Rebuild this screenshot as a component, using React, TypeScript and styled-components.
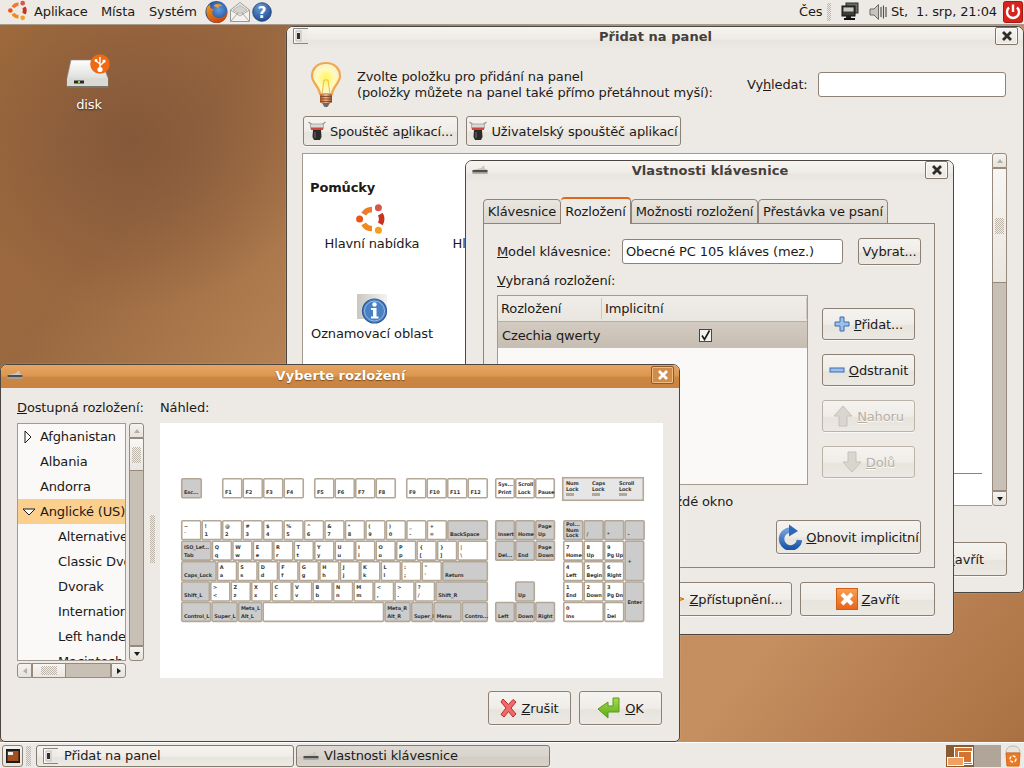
import * as React from "react";
import styled, { createGlobalStyle } from "styled-components";

const GlobalStyle = createGlobalStyle`
  html, body { margin: 0; padding: 0; overflow: hidden; background: #8a5a38; }
  body, button, input { font-family: "DejaVu Sans", sans-serif; font-size: 13px; letter-spacing: -0.13px; color: #1c1a18; }
  * { box-sizing: border-box; }
`;

const Desktop = styled.div`
  position: relative;
  width: 1024px;
  height: 768px;
  overflow: hidden;
  display: flex;
  flex-direction: column;
  background:
    radial-gradient(ellipse 190px 170px at 130px 140px, #85583a 0%, rgba(133, 88, 58, 0) 100%),
    linear-gradient(128deg, #a06b3c 0%, #9a6840 18%, #c08c5c 42%, #c58f60 78%, #a86e40 100%);
`;

const Workspace = styled.div`
  flex: 1;
`;

const Panel = styled.div`
  height: 25px;
  display: flex;
  align-items: center;
  background: #edeae5;
`;

const TopBar = styled(Panel)`
  border-bottom: 1px solid #a99b8b;
  padding: 0 1px 1px 8px;
`;

const BottomBar = styled(Panel)`
  border-top: 1px solid #fff;
  height: 26px;
  padding: 0 2px;
`;

const MenuItem = styled.span<{ $w: number }>`
  width: ${(p) => p.$w}px;
  font-size: 13px;
  white-space: nowrap;
`;

const Launchers = styled.div`
  display: flex;
  align-items: center;
  gap: 1px;
`;

const Spacer = styled.div`
  flex: 1;
`;

const Grip = styled.div<{ $h: number; $w?: number }>`
  width: ${(p) => p.$w ?? 5}px;
  height: ${(p) => p.$h}px;
  background: repeating-conic-gradient(#bdb5aa 0 25%, transparent 0 50%) 0 0 / 2px 2px;
`;

const Tray = styled.div`
  display: flex;
  align-items: center;
`;

const Clock = styled.span`
  font-size: 13px;
  white-space: pre;
  margin: 0 6px 0 4px;
`;

const DesktopIcon = styled.div`
  position: absolute;
  left: 48px;
  top: 54px;
  width: 82px;
  display: flex;
  flex-direction: column;
  align-items: center;
  gap: 7px;
  color: #fff;
  font-size: 13px;
  text-shadow: 0 1px 2px rgba(0, 0, 0, 0.6);
`;

const Win = styled.div<{ $l: number; $t: number; $w: number; $h: number; $z: number }>`
  position: absolute;
  left: ${(p) => p.$l}px;
  top: ${(p) => p.$t}px;
  width: ${(p) => p.$w}px;
  height: ${(p) => p.$h}px;
  z-index: ${(p) => p.$z};
  background: #edeae5;
  border: 1px solid #4c463f;
  border-radius: 7px 7px 5px 5px;
  box-shadow: 0 0 0 0.5px rgba(255, 255, 255, 0.15);
  display: flex;
  flex-direction: column;
  overflow: hidden;
`;

const TitleBar = styled.div<{ $focus?: boolean }>`
  height: 23px;
  flex: none;
  display: grid;
  grid-template-columns: 1fr auto 1fr;
  align-items: center;
  padding: 0 5px ${(p) => (p.$focus ? 3 : 5)}px 6px;
  background: ${(p) =>
    p.$focus
      ? "linear-gradient(#e7a563 0%, #dd9850 45%, #cc8643 55%, #c98242 100%)"
      : "linear-gradient(#f6f4f0 0%, #efece7 50%, #e8e4de 60%, #edeae5 100%)"};
`;

const TitleText = styled.span<{ $focus?: boolean }>`
  font-weight: bold;
  font-size: 13px;
  letter-spacing: 0.05px;
  color: ${(p) => (p.$focus ? "#fff" : "#45403a")};
  text-shadow: ${(p) => (p.$focus ? "0 1px 1px rgba(90, 50, 10, 0.7)" : "none")};
`;

const CloseBox = styled.div<{ $focus?: boolean }>`
  justify-self: end;
  width: 23px;
  height: 18px;
  border-radius: 2px;
  display: flex;
  align-items: center;
  justify-content: center;
  border: 1px solid ${(p) => (p.$focus ? "#8f5a26" : "#7f7569")};
  background: ${(p) => (p.$focus ? "#d08c4a" : "linear-gradient(#f7f5f1, #e9e5df)")};
  box-shadow: inset 0 0 0 1px ${(p) => (p.$focus ? "rgba(255, 220, 170, 0.6)" : "rgba(255, 255, 255, 0.7)")};
`;

const AddBody = styled.div`
  flex: 1;
  display: flex;
  flex-direction: column;
  padding: 12px 16px 16px 16px;
`;

const IntroRow = styled.div`
  height: 54px;
  display: flex;
  align-items: flex-start;
`;

const BulbSlot = styled.div`
  width: 54px;
  padding-left: 6px;
  margin-top: -1px;
`;

const IntroText = styled.div`
  line-height: 16px;
  margin-top: 7px;
  width: 390px;
  white-space: nowrap;
`;

const SearchLabel = styled.span`
  margin-top: 15px;
  width: 71px;
`;

const Entry = styled.div<{ $w: number; $h?: number }>`
  width: ${(p) => p.$w}px;
  height: ${(p) => p.$h ?? 25}px;
  background: #fff;
  border: 1px solid #8d8275;
  border-radius: 3px;
  padding: 0 3px;
  display: flex;
  align-items: center;
  white-space: nowrap;
`;

const SearchEntry = styled(Entry)`
  margin-top: 10px;
`;

const Btn = styled.div<{ $w?: number; $h?: number; $off?: boolean }>`
  ${(p) => (p.$w ? `width: ${p.$w}px;` : "")}
  height: ${(p) => p.$h ?? 33}px;
  flex: none;
  display: flex;
  align-items: center;
  justify-content: center;
  gap: 4px;
  white-space: nowrap;
  border: 1px solid ${(p) => (p.$off ? "#bcb3a8" : "#8b8073")};
  border-radius: 3px;
  color: ${(p) => (p.$off ? "#b5aea5" : "#1c1a18")};
  text-shadow: ${(p) => (p.$off ? "0 1px 0 #fff" : "none")};
  background: linear-gradient(#f5f3ef 0%, #f0ede9 50%, #e7e3dd 56%, #ece9e4 100%);
  box-shadow: 0 1px 0 rgba(255, 255, 255, 0.6);
`;

const ButtonRow = styled.div`
  display: flex;
  gap: 8px;
`;

const CatalogArea = styled.div`
  margin-top: 7px;
  height: 353px;
  display: flex;
  margin-left: -1px;
`;

const Catalog = styled.div`
  flex: 1;
  background: #fff;
  border: 1px solid #a59a8d;
  border-right: none;
  padding: 26px 7px 0;
  position: relative;
`;

const GroupTitle = styled.div`
  font-weight: bold;
  font-size: 13px;
  margin-bottom: 8px;
`;

const ItemGrid = styled.div`
  display: grid;
  grid-template-columns: 122px 122px;
  grid-auto-rows: 90px;
  margin-left: 1px;
`;

const Item = styled.div`
  display: flex;
  flex-direction: column;
  align-items: center;
  white-space: nowrap;
`;

const ItemIcon = styled.div`
  height: 32px;
  margin-bottom: 1px;
`;

const CatalogRule = styled.div`
  position: absolute;
  right: 10px;
  top: 319px;
  width: 300px;
  height: 1px;
  background: #8d8275;
`;

const VBar = styled.div<{ $w?: number }>`
  width: ${(p) => p.$w ?? 15}px;
  flex: none;
  display: flex;
  flex-direction: column;
`;

const HBar = styled.div`
  height: 15px;
  width: 109px;
  margin-top: 2px;
  display: flex;
`;

const Stepper = styled.div<{ $end: "start" | "end"; $horizontal?: boolean }>`
  flex: none;
  ${(p) => (p.$horizontal ? "width: 15px;" : "height: 15px;")}
  display: flex;
  align-items: center;
  justify-content: center;
  border: 1px solid #958a7d;
  background: linear-gradient(#f5f3ef, #e6e2dc);
  border-radius: ${(p) =>
    p.$horizontal
      ? p.$end === "start"
        ? "3px 0 0 3px"
        : "0 3px 3px 0"
      : p.$end === "start"
      ? "3px 3px 0 0"
      : "0 0 3px 3px"};
`;

const Thumb = styled.div<{ $len: number; $horizontal?: boolean }>`
  flex: none;
  ${(p) => (p.$horizontal ? `width: ${p.$len}px;` : `height: ${p.$len}px;`)}
  display: flex;
  align-items: center;
  justify-content: center;
  border: 1px solid #958a7d;
  background: linear-gradient(#f8f6f3, #eae6e0);
`;

const Trough = styled.div`
  flex: 1;
  background: #c8bfb5;
  border: 1px solid #958a7d;
  border-top: none;
`;

const HTrough = styled(Trough)`
  border: 1px solid #958a7d;
  border-left: none;
`;

const FooterRight = styled.div`
  margin-top: auto;
  display: flex;
  justify-content: flex-end;
  gap: 8px;
`;

const PropsBody = styled.div`
  flex: 1;
  display: flex;
  flex-direction: column;
  padding: 14px 18px 18px 17px;
`;

const Tabs = styled.div`
  display: flex;
  align-items: flex-end;
  height: 26px;
  position: relative;
  z-index: 1;
  margin-bottom: -1px;
`;

const Tab = styled.div<{ $w: number; $active?: boolean }>`
  width: ${(p) => p.$w}px;
  height: ${(p) => (p.$active ? 27 : 25)}px;
  display: flex;
  align-items: center;
  justify-content: center;
  white-space: nowrap;
  border: 1px solid #8f8477;
  border-left-width: ${(p) => (p.$active ? 0 : 1)}px;
  border-top: ${(p) => (p.$active ? "2px solid #e0661c" : "1px solid #8f8477")};
  border-bottom: ${(p) => (p.$active ? "none" : "1px solid #8f8477")};
  border-radius: 4px 4px 0 0;
  background: ${(p) => (p.$active ? "#edeae5" : "linear-gradient(#e9e5df, #dcd7d0)")};
`;

const TabPage = styled.div`
  flex: none;
  height: 345px;
  border: 1px solid #8f8477;
  padding: 13px 13px 13px 13px;
  display: flex;
  flex-direction: column;
`;

const ModelRow = styled.div`
  display: flex;
  align-items: center;
  height: 28px;
`;

const ModelLabel = styled.span`
  width: 125px;
  white-space: nowrap;
`;

const ModelEntry = styled(Entry)`
  margin-right: 15px;
`;

const SectionLabel = styled.div`
  margin: 8px 0 6px;
  line-height: 16px;
`;

const LayoutRow = styled.div`
  display: flex;
  gap: 14px;
`;

const Tree = styled.div`
  width: 311px;
  height: 190px;
  background: #faf9f7;
  border: 1px solid #a59a8d;
`;

const TreeHead = styled.div`
  height: 26px;
  display: flex;
  background: linear-gradient(#f0ede8, #e9e5df);
  border-bottom: 1px solid #b9afa3;
`;

const TreeCol = styled.div<{ $w?: number }>`
  ${(p) => (p.$w ? `width: ${p.$w}px;` : "flex: 1;")}
  display: flex;
  align-items: center;
  padding-left: 3px;
  margin: 2px 0;
  border-right: 1px solid #cfc8bf;
`;

const TreeRow = styled.div`
  height: 26px;
  display: flex;
  align-items: center;
  padding-left: 4px;
  background: linear-gradient(#d3cbc2, #c7bdb2);
`;

const RowName = styled.span`
  width: 197px;
`;

const Check = styled.div`
  width: 13px;
  height: 13px;
  background: #f5f3ef;
  border: 1px solid #4c463f;
  display: flex;
  align-items: center;
  justify-content: center;
`;

const SideButtons = styled.div`
  padding-top: 13px;
  display: flex;
  flex-direction: column;
  gap: 14px;
`;

const PerWindow = styled.div`
  margin-top: 9px;
  line-height: 16px;
  padding-left: 12px;
  white-space: nowrap;
`;

const RestoreRow = styled.div`
  margin-top: auto;
  display: flex;
  justify-content: flex-end;
`;

const ChooserBody = styled.div`
  flex: 1;
  display: flex;
  flex-direction: column;
  padding: 12px 17px 16px 16px;
`;

const ChooserGrid = styled.div`
  display: grid;
  grid-template-columns: 127px 16px 503px;
`;

const ColLabel = styled.div`
  height: 23px;
  line-height: 16px;
  white-space: nowrap;
`;

const ListArea = styled.div`
  display: flex;
  flex-wrap: wrap;
  width: 127px;
  gap: 0 3px;
`;

const List = styled.div`
  width: 109px;
  height: 238px;
  background: #faf9f7;
  border: 1px solid #a59a8d;
  overflow: hidden;
`;

const ListRow = styled.div<{ $child?: boolean; $sel?: boolean }>`
  position: relative;
  height: 25px;
  display: flex;
  align-items: center;
  padding-left: ${(p) => (p.$child ? 40 : 22)}px;
  white-space: nowrap;
  background: ${(p) => (p.$sel ? "#fbcf8e" : "transparent")};
`;

const Expander = styled.span`
  position: absolute;
  left: 4px;
  top: 6px;
  display: flex;
`;

const ShortBar = styled(VBar)`
  height: 238px;
`;

const PaneHandle = styled.div`
  display: flex;
  align-items: center;
  justify-content: flex-start;
  padding: 0 0 24px 6px;
`;

const Preview = styled.div`
  background: #fff;
  height: 255px;
`;

const KeyboardSvg = styled.svg`
  display: block;
`;

const ShowDesktop = styled.div`
  width: 21px;
  height: 22px;
  border: 1px solid #8b8073;
  border-radius: 3px;
  display: flex;
  align-items: center;
  justify-content: center;
  margin-right: 3px;
  background: linear-gradient(#f5f3ef, #e6e2dc);
`;

const TaskButton = styled.div<{ $active?: boolean; $w: number }>`
  width: ${(p) => p.$w}px;
  height: 22px;
  margin-right: 2px;
  display: flex;
  align-items: center;
  gap: 5px;
  padding-left: 6px;
  border: 1px solid #857a6e;
  border-radius: 3px;
  white-space: nowrap;
  background: ${(p) =>
    p.$active
      ? "linear-gradient(#dedad3 0%, #d9d4cd 50%, #d2cdc5 56%, #d7d2cb 100%)"
      : "linear-gradient(#f5f3ef 0%, #f1eee9 50%, #e8e4de 56%, #edeae5 100%)"};
`;

const U = styled.span`
  text-decoration: underline;
`;

/* icons */

const polar = (r: number, deg: number) => {
  const a = (deg * Math.PI) / 180;
  return `${16 + r * Math.cos(a)} ${16 + r * Math.sin(a)}`;
};
const arc = (r: number, from: number, to: number) => `M${polar(r, from)} A${r} ${r} 0 0 1 ${polar(r, to)}`;

function UbuntuLogo({ size }: { size: number }) {
  return (
    <svg width={size} height={size} viewBox="0 0 32 32">
      <g fill="none" strokeWidth="5.5">
        <path d={arc(9.6, -30, 30)} stroke="#c9331d" />
        <path d={arc(9.6, 90, 150)} stroke="#f08a1d" />
        <path d={arc(9.6, 210, 270)} stroke="#ee7b2d" />
      </g>
      <circle cx="3.6" cy="16" r="3.5" fill="#e8561c" />
      <circle cx="22.4" cy="4.8" r="3.5" fill="#d9564c" />
      <circle cx="22.4" cy="27.2" r="3.5" fill="#f4a01c" />
    </svg>
  );
}

function Firefox() {
  return (
    <svg width="23" height="24" viewBox="0 0 24 24">
      <defs>
        <radialGradient id="ffb" cx="0.6" cy="0.4" r="0.6">
          <stop offset="0" stopColor="#5f9de0" />
          <stop offset="1" stopColor="#1c3d8c" />
        </radialGradient>
        <linearGradient id="ffo" x1="0" y1="0" x2="0.6" y2="1">
          <stop offset="0" stopColor="#f0a020" />
          <stop offset="1" stopColor="#c8420e" />
        </linearGradient>
      </defs>
      <circle cx="12" cy="12" r="11.5" fill="url(#ffb)" />
      <path d="M2 7 C0 14 3 23 12 23.5 C20 23.5 24 17 23 11 C22 16 18 19 13 18 C8 17 6 12 9 9 C6 9 5 8 5.5 4 C4 5 3 6 2 7Z" fill="url(#ffo)" />
      <path d="M9 5 C12 3 16 3 19 6 C16 5 14 6 14 8 C12 7 10 7 9 5Z" fill="#e8a030" />
    </svg>
  );
}

function Mail() {
  return (
    <svg width="22" height="22" viewBox="0 0 22 22">
      <path d="M1.5 9 L11 1.5 L20.5 9 V20.5 H1.5Z" fill="#f3f2ee" stroke="#9a9a92" />
      <path d="M4 9 L11 4 L18 9 L11 13Z" fill="#d4d4ce" stroke="#a8a8a0" strokeWidth="0.7" />
      <path d="M1.5 20.5 L9 12 M20.5 20.5 L13 12 M1.5 9 L11 15 L20.5 9" fill="none" stroke="#a8a8a0" />
    </svg>
  );
}

function HelpIcon() {
  return (
    <svg width="20" height="20" viewBox="0 0 20 20">
      <defs>
        <radialGradient id="hb" cx="0.4" cy="0.25" r="0.8">
          <stop offset="0" stopColor="#6c98d2" />
          <stop offset="1" stopColor="#1d4a90" />
        </radialGradient>
      </defs>
      <circle cx="10" cy="10" r="9.3" fill="url(#hb)" stroke="#1a3c74" strokeWidth="0.8" />
      <text x="10" y="15.5" textAnchor="middle" fontSize="15" fontWeight="bold" fill="#fff" fontFamily="DejaVu Sans">?</text>
    </svg>
  );
}

function MonitorIcon() {
  return (
    <svg width="18" height="20" viewBox="0 0 18 20">
      <rect x="5" y="1" width="12" height="10" fill="#6a6a66" stroke="#2c2c2a" />
      <rect x="1" y="4" width="13" height="10" fill="#3c3c3a" stroke="#111" />
      <rect x="2.5" y="5.5" width="10" height="4" fill="#c9c9c4" />
      <rect x="5" y="14" width="5" height="2" fill="#222" />
      <rect x="3" y="16" width="11" height="2" fill="#111" />
    </svg>
  );
}

function SpeakerIcon() {
  return (
    <svg width="19" height="18" viewBox="0 0 19 18">
      <path d="M2 6 H6 L10.5 1.5 V16.5 L6 12 H2Z" fill="#c6c4bf" stroke="#6a6a66" />
      <path d="M13 4 V14 M15.5 2.5 V15.5 M18 4 V14" stroke="#55534f" strokeWidth="1.2" />
    </svg>
  );
}

function PowerIcon() {
  return (
    <svg width="20" height="22" viewBox="0 0 20 22">
      <rect x="0.5" y="0.5" width="19" height="21" rx="2" fill="#d8231c" stroke="#a81812" />
      <path d="M6 6.5 A6 6 0 1 0 14 6.5" fill="none" stroke="#fff" strokeWidth="2.4" />
      <path d="M10 3.5 V11" stroke="#fff" strokeWidth="2.4" />
    </svg>
  );
}

function DiskIcon() {
  return (
    <svg width="46" height="36" viewBox="0 0 46 36">
      <defs>
        <linearGradient id="dk" x1="0" y1="0" x2="0" y2="1">
          <stop offset="0" stopColor="#ffffff" />
          <stop offset="1" stopColor="#cfcfcc" />
        </linearGradient>
      </defs>
      <path d="M5 6 H35 L42 24 V33 H1 V24Z" fill="url(#dk)" stroke="#8a8782" strokeWidth="0.6" />
      <rect x="1" y="24" width="41" height="9" fill="#d9d9d5" />
      <rect x="1" y="32" width="41" height="2" fill="#77746e" />
      <rect x="8" y="26.5" width="10" height="3" fill="#2a2a28" />
      <rect x="12" y="27" width="2" height="2" fill="#8fdc2c" />
      <circle cx="34" cy="10" r="9.8" fill="#ee6a14" />
      <path d="M34 3 V16 M34 10 L30 7 M34 11.5 L38 8" stroke="#fff" strokeWidth="1.4" fill="none" />
      <circle cx="34" cy="15.5" r="2.6" fill="#fff" />
      <rect x="36.6" y="5.8" width="2.8" height="2.8" fill="#fff" />
      <circle cx="30" cy="6.5" r="1.4" fill="#fff" />
    </svg>
  );
}

function Bulb() {
  return (
    <svg width="34" height="48" viewBox="0 0 34 48">
      <defs>
        <radialGradient id="bl" cx="0.5" cy="0.5" r="0.55">
          <stop offset="0" stopColor="#fff45c" />
          <stop offset="0.55" stopColor="#fffab8" />
          <stop offset="1" stopColor="#f4efd8" />
        </radialGradient>
        <linearGradient id="bc" x1="0" y1="0" x2="1" y2="0">
          <stop offset="0" stopColor="#a4582c" />
          <stop offset="0.5" stopColor="#f2b48a" />
          <stop offset="1" stopColor="#8c4c2a" />
        </linearGradient>
      </defs>
      <path d="M17 2 C7 2 3 9 3 15 C3 22 10 25 11 33 H23 C24 25 31 22 31 15 C31 9 27 2 17 2Z" fill="url(#bl)" stroke="#f0a850" strokeWidth="2.2" />
      <path d="M13 33 L15 19 M21 33 L19 19 M15 19 H19" stroke="#e8c040" fill="none" />
      <rect x="11" y="33" width="12" height="9" rx="1.5" fill="url(#bc)" />
      <path d="M11 35.5 H23 M11 38 H23 M11 40.5 H23" stroke="#7a4022" strokeWidth="0.8" />
      <path d="M13 42 H21 L18.5 46 H15.5Z" fill="#6a6a66" />
    </svg>
  );
}

function LauncherIcon() {
  return (
    <svg width="18" height="20" viewBox="0 0 18 20">
      <path d="M0.5 1 L4.5 4 M17.5 1 L13.5 4" stroke="#9a9690" strokeWidth="1.4" />
      <rect x="2.5" y="3" width="13" height="5" rx="1" fill="#dcd9d4" stroke="#8a8680" strokeWidth="0.6" />
      <rect x="3" y="6.5" width="12" height="2.5" fill="#d0453c" />
      <path d="M5 9 H13 L13.5 16 L12 19 H6 L4.5 16Z" fill="#2c2b29" />
      <path d="M7 11 V17" stroke="#77746e" />
    </svg>
  );
}

function InfoIcon() {
  return (
    <svg width="32" height="31" viewBox="0 0 32 31">
      <defs>
        <linearGradient id="ig" x1="0" y1="0" x2="1" y2="0">
          <stop offset="0" stopColor="#c9c7c2" />
          <stop offset="1" stopColor="#f4f3f0" />
        </linearGradient>
      </defs>
      <rect x="1" y="1" width="30" height="25" fill="url(#ig)" />
      <circle cx="18.5" cy="18" r="12" fill="#4a80c4" stroke="#2b5a9c" strokeWidth="1.2" />
      <circle cx="18.5" cy="18" r="10" fill="none" stroke="#a8c6e8" strokeWidth="0.8" />
      <circle cx="18.5" cy="11.5" r="2.2" fill="#fff" />
      <path d="M15 15 H20.5 V23.5 H22.5 V25.5 H15 V23.5 H17 V17 H15Z" fill="#fff" />
    </svg>
  );
}

function KbGlyph() {
  return (
    <svg width="16" height="10" viewBox="0 0 16 10">
      <path d="M0.5 5 L9 3 L11 1 H13 L12 3 L15.5 5 V8.5 H0.5Z" fill="#c9c7c2" />
      <rect x="0.5" y="5" width="15" height="2.2" fill="#4e4e4a" />
      <rect x="0.5" y="7.2" width="15" height="1.5" fill="#9d9b96" />
    </svg>
  );
}

function WinGlyph() {
  return (
    <svg width="16" height="16" viewBox="0 0 16 16">
      <defs>
        <linearGradient id="wg" x1="0" y1="0" x2="1" y2="0">
          <stop offset="0" stopColor="#ffffff" />
          <stop offset="1" stopColor="#dcd8d2" stopOpacity="0" />
        </linearGradient>
      </defs>
      <rect x="0.5" y="0.5" width="15" height="15" fill="url(#wg)" />
      <path d="M15 0.5 H0.5 V15.5 H15" fill="none" stroke="#888480" />
      <rect x="4" y="5" width="3" height="6" fill="#33312e" />
      <rect x="3" y="3" width="5" height="10" fill="none" stroke="#bdb9b3" />
    </svg>
  );
}

function CloseX({ light }: { light?: boolean }) {
  return (
    <svg width="12" height="12" viewBox="0 0 12 12">
      <path d="M2 2 L10 10 M10 2 L2 10" stroke={light ? "#fff" : "#2e2b28"} strokeWidth="2.8" />
    </svg>
  );
}

function PlusIcon() {
  return (
    <svg width="16" height="16" viewBox="0 0 16 16">
      <path d="M6 1 H10 V6 H15 V10 H10 V15 H6 V10 H1 V6 H6Z" fill="#9cc0ea" stroke="#3a6cb0" />
    </svg>
  );
}

function MinusIcon() {
  return (
    <svg width="16" height="16" viewBox="0 0 16 16">
      <rect x="1" y="6" width="14" height="4" fill="#9cc0ea" stroke="#3a6cb0" />
    </svg>
  );
}

function ArrowIcon({ down }: { down?: boolean }) {
  return (
    <svg width="20" height="22" viewBox="0 0 20 22">
      <path
        d={down ? "M6 1 H14 V11 H19 L10 21 L1 11 H6Z" : "M6 21 H14 V11 H19 L10 1 L1 11 H6Z"}
        fill="#d9d5cf"
        stroke="#c6c1b9"
      />
    </svg>
  );
}

function RefreshIcon() {
  return (
    <svg width="24" height="26" viewBox="0 0 24 26">
      <defs>
        <linearGradient id="rf" x1="0" y1="0" x2="0" y2="1">
          <stop offset="0" stopColor="#6f9fdc" />
          <stop offset="1" stopColor="#1e57a8" />
        </linearGradient>
      </defs>
      <path d="M13 6 A9 9 0 1 0 21.5 16" fill="none" stroke="url(#rf)" strokeWidth="5.5" />
      <path d="M11 0.5 L20 7 L11 12.5Z" fill="#2f68b8" />
    </svg>
  );
}

function StarIcon() {
  return (
    <svg width="24" height="24" viewBox="0 0 24 24">
      <path d="M12 1 L15 9 L23 12 L15 15 L12 23 L9 15 L1 12 L9 9Z" fill="#f2a53a" stroke="#c8741a" />
    </svg>
  );
}

function OrangeClose() {
  return (
    <svg width="22" height="22" viewBox="0 0 22 22">
      <defs>
        <linearGradient id="oc" x1="0" y1="0" x2="0" y2="1">
          <stop offset="0" stopColor="#f8a050" />
          <stop offset="1" stopColor="#e86418" />
        </linearGradient>
      </defs>
      <rect x="0.5" y="0.5" width="21" height="21" fill="url(#oc)" stroke="#d45c14" />
      <path d="M6 6 L16 16 M16 6 L6 16" stroke="#fff" strokeWidth="4" />
    </svg>
  );
}

function RedX() {
  return (
    <svg width="17" height="20" viewBox="0 0 17 20">
      <path
        d="M3 1 L8.5 6.5 L13 1.5 L16 4 L11 10 L16 16 L13 19 L8.5 13.5 L4 19 L1 16.5 L6 10 L1 4Z"
        fill="#f06a6a"
        stroke="#c02a2a"
        strokeLinejoin="round"
      />
    </svg>
  );
}

function GreenArrow() {
  return (
    <svg width="24" height="22" viewBox="0 0 24 22">
      <defs>
        <linearGradient id="ga" x1="0" y1="0" x2="0" y2="1">
          <stop offset="0" stopColor="#a4dc4c" />
          <stop offset="1" stopColor="#5aa818" />
        </linearGradient>
      </defs>
      <path d="M16 1 H22 V15 H11 V21 L1 12 L11 5 V9 H16Z" fill="url(#ga)" stroke="#5c9a1e" />
    </svg>
  );
}

function Tick() {
  return (
    <svg width="11" height="11" viewBox="0 0 11 11">
      <path d="M2 5.5 L4.5 9.5 L9.5 0.5" fill="none" stroke="#1c1a18" strokeWidth="1.6" />
    </svg>
  );
}

function Tri({ dir, color = "#4c463f" }: { dir: "up" | "down" | "left" | "right"; color?: string }) {
  const pts = { up: "1,6 4,2 7,6", down: "1,2 4,6 7,2", left: "6,1 2,4 6,7", right: "2,1 6,4 2,7" }[dir];
  return (
    <svg width="8" height="8" viewBox="0 0 8 8">
      <polygon points={pts} fill={color} />
    </svg>
  );
}

function Expand({ open }: { open?: boolean }) {
  return (
    <svg width="14" height="14" viewBox="0 0 14 14">
      <polygon points={open ? "1,4 13,4 7,10" : "3,1 3,13 9,7"} fill="#fff" stroke="#1c1a18" strokeWidth="1" />
    </svg>
  );
}

function WorkspaceSwitcher() {
  return (
    <svg width="55" height="22" viewBox="0 0 55 22">
      <rect width="28" height="22" fill="#8a5a32" />
      <rect x="28" width="27" height="22" fill="#b0a598" />
      <rect x="8.5" y="2.5" width="18" height="17" fill="#d27530" stroke="#fff" />
      <rect x="12.5" y="6.5" width="13" height="11" fill="#d27530" stroke="#fff" />
      <rect x="1.5" y="12.5" width="16" height="8" fill="#f2a060" stroke="#fff" />
    </svg>
  );
}

function TrashIcon() {
  return (
    <svg width="18" height="22" viewBox="0 0 18 22">
      <path d="M2 8 C2 2 6 1 9 1 C13 1 16 3 16 8Z" fill="#e6e4df" stroke="#bbb8b2" />
      <path d="M2 8 H16 L15 21 H3Z" fill="#ec7a24" stroke="#d8641a" />
      <circle cx="9" cy="14" r="3" fill="none" stroke="#fff" strokeWidth="1.4" strokeDasharray="3 1.5" />
    </svg>
  );
}

function ShowDesktopIcon() {
  return (
    <svg width="16" height="16" viewBox="0 0 16 16">
      <rect x="1" y="1" width="14" height="14" fill="#1c1a18" />
      <rect x="2.5" y="3" width="11" height="10" fill="#a4501e" />
      <rect x="3" y="4" width="5" height="3" fill="#f4f0ea" />
    </svg>
  );
}

/* keyboard preview */

type Key = { x: number; y: number; w: number; h: number; top?: string; low?: string; gray?: boolean; mid?: string; lines?: string[] };

const U1 = 20.47;
const ROW_Y = [520, 540.5, 561, 581.3, 601.7];
const ROW_H = 20.4;
const OX = 160;
const OY = 423;

function rowKeys(row: number, start: number, defs: [number, string, string?, boolean?][]): Key[] {
  let x = start;
  return defs.map(([u, top, low, gray]) => {
    const key: Key = { x, y: ROW_Y[row], w: u * U1, h: ROW_H, top: low === undefined ? undefined : top, low: low === undefined ? top : low, gray };
    x += u * U1;
    return key;
  });
}

const letters = (s: string): [number, string, string][] =>
  s.split(" ").map((p) => [1, p[0], p.slice(1)] as [number, string, string]);

const FN_Y = 478;
const fnGroup = (start: number, names: string[]): Key[] =>
  names.map((n, i) => ({ x: start + i * 20.5, y: FN_Y, w: 20.5, h: 20.5, low: n }));

const KEYS: Key[] = [
  { x: 181, y: FN_Y, w: 21, h: 20.5, low: "Esc...", gray: true },
  ...fnGroup(222, ["F1", "F2", "F3", "F4"]),
  ...fnGroup(314, ["F5", "F6", "F7", "F8"]),
  ...fnGroup(406, ["F9", "F10", "F11", "F12"]),
  { x: 495, y: FN_Y, w: 20, h: 20.5, top: "Sys...", low: "Print" },
  { x: 515, y: FN_Y, w: 20, h: 20.5, top: "Scroll", low: "Lock" },
  { x: 535, y: FN_Y, w: 20, h: 20.5, low: "Pause" },
  ...rowKeys(0, 181, [...letters("~` !1 @2 #3 $4 %5 ^6 &7 *8 (9 )0 _- +="), [2, "BackSpace", undefined, true]]),
  ...rowKeys(1, 181, [[1.5, "ISO_Lef...", "Tab", true], ...letters("Qq Ww Ee Rr Tt Yy Uu Ii Oo Pp {[ }]"), [1.5, "|", "\\"]]),
  ...rowKeys(2, 181, [[1.75, "Caps_Lock", undefined, true], ...letters("Aa Ss Dd Ff Gg Hh Jj Kk Ll :; \"'"), [2.25, "Return", undefined, true]]),
  ...rowKeys(3, 181, [[1.42, "Shift_L", undefined, true], [1, ">", "<"], ...letters("Zz Xx Cc Vv Bb Nn Mm <, >. ?/"), [2.58, "Shift_R", undefined, true]]),
  ...rowKeys(4, 181, [
    [1.48, "Control_L", undefined, true],
    [1.3, "Super_L", undefined, true],
    [1.2, "Meta_L", "Alt_L", true],
    [5.95, ""],
    [1.3, "Meta_R", "Alt_R", true],
    [1.1, "Super_R", undefined, true],
    [1.38, "Menu", undefined, true],
    [1.29, "Contro...", undefined, true],
  ]),
  ...rowKeys(0, 495, [[0.98, "Insert", undefined, true], [0.98, "Home", undefined, true], [0.98, "Page", "Up", true]]),
  ...rowKeys(1, 495, [[0.98, "Del...", undefined, true], [0.98, "End", undefined, true], [0.98, "Page", "Down", true]]),
  { x: 515, y: ROW_Y[3], w: 20, h: ROW_H, low: "Up", gray: true },
  ...rowKeys(4, 495, [[0.98, "Left", undefined, true], [0.98, "Down", undefined, true], [0.98, "Right", undefined, true]]),
  { x: 563, y: ROW_Y[0], w: U1, h: ROW_H, lines: ["Pol...", "Num", "Lock"], gray: true },
  ...rowKeys(0, 583.47, [[1, "/", undefined, true], [1, "*", undefined, true], [1, "-", undefined, true]]),
  ...rowKeys(1, 563, [[1, "7", "Home"], [1, "8", "Up"], [1, "9", "Pg Up"]]),
  { x: 624.4, y: ROW_Y[1], w: 20, h: 40.8, mid: "+", gray: true },
  ...rowKeys(2, 563, [[1, "4", "Left"], [1, "5", "Begin"], [1, "6", "Right"]]),
  ...rowKeys(3, 563, [[1, "1", "End"], [1, "2", "Down"], [1, "3", "Pg Dn"]]),
  { x: 624.4, y: ROW_Y[3], w: 20, h: 40.8, mid: "Enter", gray: true },
  ...rowKeys(4, 563, [[2, "0", "Ins"], [1, ".", "Del"]]),
];

function Keyboard() {
  return (
    <KeyboardSvg width="503" height="255" viewBox="0 0 503 255">
      <g fontFamily="DejaVu Sans" fontSize="5" fontWeight="bold" fill="#3a3835">
        {KEYS.map((k, i) => {
          const x = k.x - OX;
          const y = k.y - OY;
          return (
            <g key={i}>
              <rect x={x + 0.75} y={y + 0.75} width={k.w - 1.5} height={k.h - 1.5} rx="1" fill={k.gray ? "#cccccc" : "#ffffff"} stroke="#b3a898" strokeWidth="1.6" />
              {k.top && <text x={x + 3} y={y + 8}>{k.top}</text>}
              {k.low && <text x={x + 3} y={y + 16}>{k.low}</text>}
              {k.mid && <text x={x + 3} y={y + k.h / 2 + 2}>{k.mid}</text>}
              {k.lines?.map((l, n) => (
                <text key={l} x={x + 3} y={y + 6 + n * 5.5}>{l}</text>
              ))}
            </g>
          );
        })}
        <rect x="402.75" y="54.75" width="80.5" height="22.5" fill="#e6e6e6" stroke="#b3a898" strokeWidth="1.6" />
        {[
          ["Num", 406],
          ["Caps", 432],
          ["Scroll", 459],
        ].map(([name, x]) => (
          <g key={name as string}>
            <text x={x as number} y="62">{name}</text>
            <text x={x as number} y="68">Lock</text>
            <rect x={x as number} y="70" width="8" height="3" fill="#b3a898" />
          </g>
        ))}
      </g>
    </KeyboardSvg>
  );
}

const COUNTRIES: { label: string; child?: boolean; sel?: boolean; exp?: "open" | "closed" }[] = [
  { label: "Afghanistan", exp: "closed" },
  { label: "Albania" },
  { label: "Andorra" },
  { label: "Anglické (US)", exp: "open", sel: true },
  { label: "Alternative", child: true },
  { label: "Classic Dvorak", child: true },
  { label: "Dvorak", child: true },
  { label: "International", child: true },
  { label: "Left handed", child: true },
  { label: "Macintosh", child: true },
];

function Scrollbar({ len }: { len: number }) {
  return (
    <>
      <Stepper $end="start"><Tri dir="up" color="#b5aea5" /></Stepper>
      <Thumb $len={len}>
        <Grip $h={16} $w={9} />
      </Thumb>
      <Trough />
      <Stepper $end="end"><Tri dir="down" color="#1c1a18" /></Stepper>
    </>
  );
}

export default function App() {
  return (
    <Desktop>
      <GlobalStyle />
      <TopBar>
        <MenuItem $w={26}><UbuntuLogo size={21} /></MenuItem>
        <MenuItem $w={67}>Aplikace</MenuItem>
        <MenuItem $w={48}>Místa</MenuItem>
        <MenuItem $w={56}>Systém</MenuItem>
        <Launchers>
          <Firefox />
          <Mail />
          <HelpIcon />
        </Launchers>
        <Spacer />
        <Tray>
          <MenuItem $w={28}>Čes</MenuItem>
          <Grip $h={18} $w={4} />
          <MenuItem $w={10} />
          <MonitorIcon />
          <MenuItem $w={9} />
          <SpeakerIcon />
          <Clock>St,  1. srp, 21:04</Clock>
          <PowerIcon />
        </Tray>
      </TopBar>

      <Workspace>
        <DesktopIcon>
          <DiskIcon />
          <span>disk</span>
        </DesktopIcon>

        <Win $l={286} $t={26} $w={738} $h={567} $z={1}>
          <TitleBar>
            <WinGlyph />
            <TitleText>Přidat na panel</TitleText>
            <CloseBox><CloseX /></CloseBox>
          </TitleBar>
          <AddBody>
            <IntroRow>
              <BulbSlot><Bulb /></BulbSlot>
              <IntroText>
                Zvolte položku pro přidání na panel
                <br />
                (položky můžete na panel také přímo přetáhnout myší):
              </IntroText>
              <SearchLabel>Vy<U>h</U>ledat:</SearchLabel>
              <SearchEntry $w={188} />
            </IntroRow>
            <ButtonRow>
              <Btn $w={155} $h={30}><LauncherIcon /><span>Spouštěč a<U>p</U>likací...</span></Btn>
              <Btn $w={215} $h={30}><LauncherIcon /><span>Uživatelský spouštěč aplikací</span></Btn>
            </ButtonRow>
            <CatalogArea>
              <Catalog>
                <GroupTitle>Pomůcky</GroupTitle>
                <ItemGrid>
                  <Item>
                    <ItemIcon><UbuntuLogo size={32} /></ItemIcon>
                    Hlavní nabídka
                  </Item>
                  <Item>
                    <ItemIcon />
                    Hlavní oblast
                  </Item>
                  <Item>
                    <ItemIcon><InfoIcon /></ItemIcon>
                    Oznamovací oblast
                  </Item>
                </ItemGrid>
                <CatalogRule />
              </Catalog>
              <VBar>
                <Scrollbar len={115} />
              </VBar>
            </CatalogArea>
            <FooterRight>
              <Btn $w={110} $h={34}><OrangeClose /><span><U>Z</U>avřít</span></Btn>
            </FooterRight>
          </AddBody>
        </Win>

        <Win $l={465} $t={160} $w={489} $h={475} $z={2}>
          <TitleBar>
            <KbGlyph />
            <TitleText>Vlastnosti klávesnice</TitleText>
            <CloseBox><CloseX /></CloseBox>
          </TitleBar>
          <PropsBody>
            <Tabs>
              <Tab $w={78}>Klávesnice</Tab>
              <Tab $w={70} $active>Rozložení</Tab>
              <Tab $w={127}>Možnosti rozložení</Tab>
              <Tab $w={130}>Přestávka ve psaní</Tab>
            </Tabs>
            <TabPage>
              <ModelRow>
                <ModelLabel><U>M</U>odel klávesnice:</ModelLabel>
                <ModelEntry $w={221}>Obecné PC 105 kláves (mez.)</ModelEntry>
                <Btn $w={63} $h={27}>Vybrat...</Btn>
              </ModelRow>
              <SectionLabel><U>V</U>ybraná rozložení:</SectionLabel>
              <LayoutRow>
                <Tree>
                  <TreeHead>
                    <TreeCol $w={104}>Rozložení</TreeCol>
                    <TreeCol>Implicitní</TreeCol>
                  </TreeHead>
                  <TreeRow>
                    <RowName>Czechia qwerty</RowName>
                    <Check><Tick /></Check>
                  </TreeRow>
                </Tree>
                <SideButtons>
                  <Btn $w={93} $h={32}><PlusIcon /><span><U>P</U>řidat...</span></Btn>
                  <Btn $w={93} $h={32}><MinusIcon /><span><U>O</U>dstranit</span></Btn>
                  <Btn $w={93} $h={32} $off><ArrowIcon /><span><U>N</U>ahoru</span></Btn>
                  <Btn $w={93} $h={32} $off><ArrowIcon down /><span><U>D</U>olů</span></Btn>
                </SideButtons>
              </LayoutRow>
              <PerWindow>Oddělené rozložení pro každé okno</PerWindow>
              <RestoreRow>
                <Btn $w={145} $h={34}><RefreshIcon /><span><U>O</U>bnovit implicitní</span></Btn>
              </RestoreRow>
            </TabPage>
            <FooterRight>
              <Btn $w={140} $h={34}><StarIcon /><span><U>Z</U>přístupnění...</span></Btn>
              <Btn $w={135} $h={34}><OrangeClose /><span><U>Z</U>avřít</span></Btn>
            </FooterRight>
          </PropsBody>
        </Win>

        <Win $l={0} $t={364} $w={680} $h={378} $z={3}>
          <TitleBar $focus>
            <KbGlyph />
            <TitleText $focus>Vyberte rozložení</TitleText>
            <CloseBox $focus><CloseX light /></CloseBox>
          </TitleBar>
          <ChooserBody>
            <ChooserGrid>
              <ColLabel><U>D</U>ostupná rozložení:</ColLabel>
              <span />
              <ColLabel>Náhled:</ColLabel>
              <ListArea>
                <List>
                  {COUNTRIES.map((c) => (
                    <ListRow key={c.label} $child={c.child} $sel={c.sel}>
                      {c.exp && (
                        <Expander><Expand open={c.exp === "open"} /></Expander>
                      )}
                      {c.label}
                    </ListRow>
                  ))}
                </List>
                <ShortBar>
                  <Scrollbar len={33} />
                </ShortBar>
                <HBar>
                  <Stepper $end="start" $horizontal><Tri dir="left" color="#b5aea5" /></Stepper>
                  <Thumb $len={34} $horizontal>
                    <Grip $h={9} $w={16} />
                  </Thumb>
                  <HTrough />
                  <Stepper $end="end" $horizontal><Tri dir="right" color="#1c1a18" /></Stepper>
                </HBar>
              </ListArea>
              <PaneHandle><Grip $h={48} $w={5} /></PaneHandle>
              <Preview><Keyboard /></Preview>
            </ChooserGrid>
            <FooterRight>
              <Btn $w={83} $h={34}><RedX /><span><U>Z</U>rušit</span></Btn>
              <Btn $w={83} $h={34}><GreenArrow /><span><U>O</U>K</span></Btn>
            </FooterRight>
          </ChooserBody>
        </Win>
      </Workspace>

      <BottomBar>
        <ShowDesktop><ShowDesktopIcon /></ShowDesktop>
        <Grip $h={20} $w={5} />
        <MenuItem $w={5} />
        <TaskButton $w={258}><WinGlyph />Přidat na panel</TaskButton>
        <TaskButton $w={254} $active><KbGlyph />Vlastnosti klávesnice</TaskButton>
        <Spacer />
        <WorkspaceSwitcher />
        <MenuItem $w={3} />
        <TrashIcon />
      </BottomBar>
    </Desktop>
  );
}
